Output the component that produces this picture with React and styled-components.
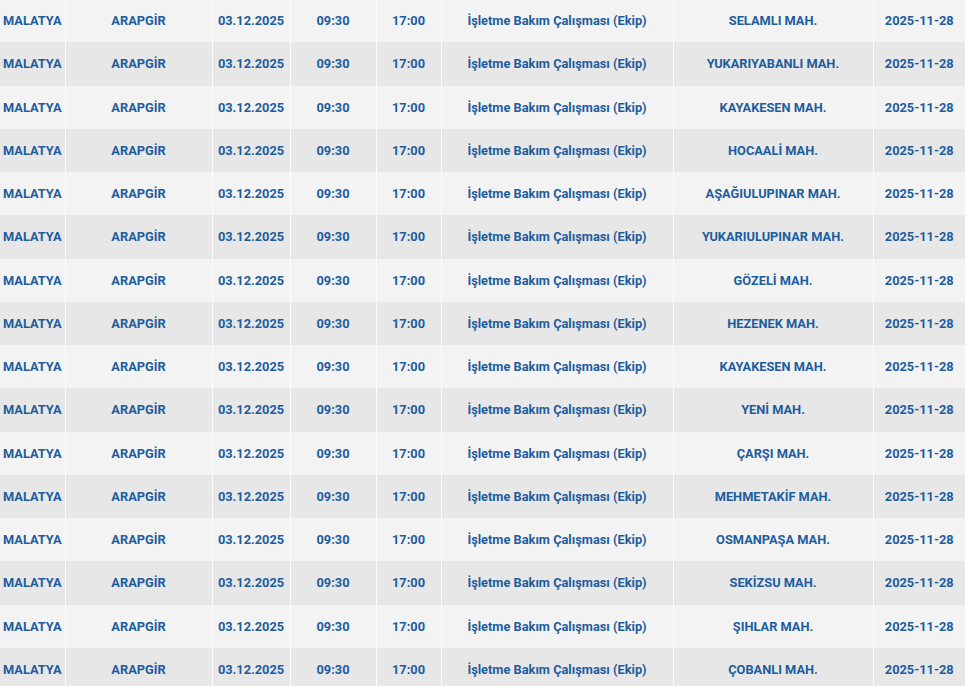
import React from "react";
import styled, { createGlobalStyle } from "styled-components";

const GlobalStyle = createGlobalStyle`
  html, body {
    margin: 0;
    padding: 0;
    background: #f3f3f3;
    overflow: hidden;
  }
  body {
    font-family: Roboto, "Liberation Sans", Arial, sans-serif;
  }
`;

const Wrapper = styled.div`
  width: 965px;
  margin-top: -1px;
`;

const Table = styled.table`
  width: 100%;
  border-collapse: collapse;
  table-layout: fixed;
`;

const Row = styled.tr`
  height: 43.25px;
  background: ${(p) => (p.$odd ? "#e7e7e7" : "#f3f3f3")};
`;

const Cell = styled.td`
  padding: 0 2px;
  text-align: center;
  vertical-align: middle;
  color: #1d5d9e;
  font-size: 12.8px;
  font-weight: 700;
  white-space: nowrap;
  border-left: 1px solid #fbfbfb;
  &:first-child {
    border-left: none;
  }
`;

const widths = [65, 147, 78, 86, 65, 232, 200, 92];

const districts = [
  "SELAMLI MAH.",
  "YUKARIYABANLI MAH.",
  "KAYAKESEN MAH.",
  "HOCAALİ MAH.",
  "AŞAĞIULUPINAR MAH.",
  "YUKARIULUPINAR MAH.",
  "GÖZELİ MAH.",
  "HEZENEK MAH.",
  "KAYAKESEN MAH.",
  "YENİ MAH.",
  "ÇARŞI MAH.",
  "MEHMETAKİF MAH.",
  "OSMANPAŞA MAH.",
  "SEKİZSU MAH.",
  "ŞIHLAR MAH.",
  "ÇOBANLI MAH.",
];

export default function App() {
  return (
    <Wrapper>
      <GlobalStyle />
      <Table>
        <colgroup>
          {widths.map((w, i) => (
            <col key={i} style={{ width: w }} />
          ))}
        </colgroup>
        <tbody>
          {districts.map((d, i) => (
            <Row key={i} $odd={i % 2 === 1}>
              <Cell>MALATYA</Cell>
              <Cell>ARAPGİR</Cell>
              <Cell>03.12.2025</Cell>
              <Cell>09:30</Cell>
              <Cell>17:00</Cell>
              <Cell>İşletme Bakım Çalışması (Ekip)</Cell>
              <Cell>{d}</Cell>
              <Cell>2025-11-28</Cell>
            </Row>
          ))}
        </tbody>
      </Table>
    </Wrapper>
  );
}
